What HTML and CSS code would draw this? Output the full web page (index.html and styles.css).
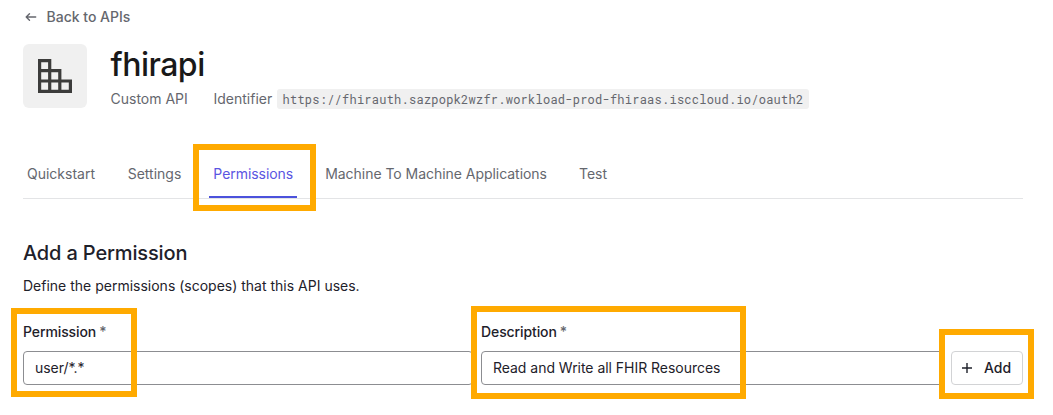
FILE: index.html
```html
<!DOCTYPE html>
<html lang="en">
<head>
<meta charset="utf-8">
<title>fhirapi</title>
<link rel="stylesheet" href="styles.css">
</head>
<body>
<main class="page">
  <a class="back">
    <svg width="12" height="10" viewBox="0 0 12 10" fill="none" stroke="currentColor" stroke-width="1.4" stroke-linecap="round" stroke-linejoin="round"><path d="M10.7 5H1.2M4.5 1.7L1.2 5l3.3 3.3"/></svg>
    <span>Back to APIs</span>
  </a>
  <header class="header">
    <div class="tile">
      <svg width="34" height="34" viewBox="0 0 34 34" fill="none" stroke="#3c3c3b" stroke-width="3.2"><path d="M1.6 1.6H11.7V32.4H1.6ZM1.6 11.7H21.8V32.4M1.6 22H32.4V32.4H1.6"/></svg>
    </div>
    <div class="info">
      <h1 class="title">fhirapi</h1>
      <div class="meta"><span class="kind">Custom API</span><span class="ident">Identifier</span><code class="code">https://fhirauth.sazpopk2wzfr.workload-prod-fhiraas.isccloud.io/oauth2</code></div>
    </div>
  </header>
  <nav class="tabs">
    <a class="tab">Quickstart</a>
    <a class="tab tab-settings">Settings</a>
    <a class="tab tab-active">Permissions</a>
    <a class="tab tab-machine">Machine To Machine Applications</a>
    <a class="tab">Test</a>
  </nav>
  <h2 class="section-title">Add a Permission</h2>
  <p class="lead">Define the permissions (scopes) that this API uses.</p>
  <form class="form">
    <div class="field">
      <div class="label">Permission<span class="star">*</span></div>
      <div class="input">user/*.*</div>
    </div>
    <div class="field field-desc">
      <div class="label">Description<span class="star">*</span></div>
      <div class="input">Read and Write all FHIR Resources</div>
    </div>
    <button class="add" type="button">
      <svg width="10" height="10" viewBox="0 0 10 10" fill="none" stroke="#1e212a" stroke-width="1.4"><path d="M5 0V10M0 5H10"/></svg>
      <span>Add</span>
    </button>
  </form>
</main>
<div class="mark mark-tab"></div>
<div class="mark mark-permission"></div>
<div class="mark mark-description"></div>
<div class="mark mark-add"></div>
</body>
</html>
```
FILE: styles.css
```css
* { box-sizing: border-box; }
body {
  margin: 0;
  background: #fff;
  color: #1e212a;
  font: 14px/20px Inter, "Liberation Sans", sans-serif;
}
.page { width: 1023px; height: 415px; padding: 7px 0 0 23px; }
.back { display: flex; align-items: center; gap: 9.5px; height: 20px; padding-left: 2px; color: #65676e; font-weight: 500; }
.header { display: flex; gap: 24px; margin-top: 17px; height: 64px; }
.tile { display: flex; align-items: center; justify-content: center; width: 64px; height: 64px; border-radius: 6px; background: #f0f0f0; }
.info { margin-left: -0.5px; }
.title { margin: 0; padding-top: 1px; height: 40px; font-size: 32px; line-height: 40px; font-weight: 500; letter-spacing: -0.5px; color: #191919; }
.meta { display: flex; align-items: center; margin-top: 5px; height: 20px; color: #65676e; white-space: nowrap; }
.kind { width: 103px; }
.ident { width: 63px; }
.code { height: 20px; padding: 0 6px; border-radius: 3px; background: #f0f0f0; font: 12px/21px "Roboto Mono", "DejaVu Sans Mono", monospace; letter-spacing: 0.24px; }
.tabs { display: flex; gap: 24px; margin-top: 48px; width: 1000px; height: 43px; border-bottom: 1px solid #e3e4e6; }
.tab { height: 42px; padding: 8px 4px 0; color: #65676e; white-space: nowrap; }
.tab-settings { padding-left: 4.7px; }
.tab-active { color: #5a55e2; border-bottom: 2px solid #4c52dc; letter-spacing: -0.05px; }
.tab-machine { letter-spacing: -0.04px; }
.section-title { margin: 40px 0 0; font-size: 20px; line-height: 28px; font-weight: 500; letter-spacing: -0.15px; }
.lead { margin: 9px 0 0; }
.form { display: flex; align-items: flex-end; margin-top: 26px; }
.field { width: 450px; }
.field-desc { width: 462px; margin-left: 8px; }
.label { height: 20px; font-weight: 500; letter-spacing: -0.1px; }
.star { margin-left: 3px; color: #65676e; }
.input { height: 34px; margin-top: 9px; padding: 6px 11px; border: 1px solid #8c8d91; border-radius: 4px; white-space: nowrap; letter-spacing: -0.03px; }
.add { display: flex; align-items: center; gap: 12px; width: 72px; height: 34px; margin-left: 8px; padding: 0 10px; border: 1px solid #d2d3d5; border-radius: 4px; background: #fff; color: #1e212a; font: inherit; font-weight: 500; }
/* Highlight frames laid over the page */
.mark { position: absolute; border: 6px solid #ffaa00; }
.mark-tab { left: 193px; top: 144px; width: 123px; height: 67px; }
.mark-permission { left: 11px; top: 308px; width: 126px; height: 89px; }
.mark-description { left: 471px; top: 306px; width: 275px; height: 93px; }
.mark-add { left: 939px; top: 329px; width: 95px; height: 70px; }
```
